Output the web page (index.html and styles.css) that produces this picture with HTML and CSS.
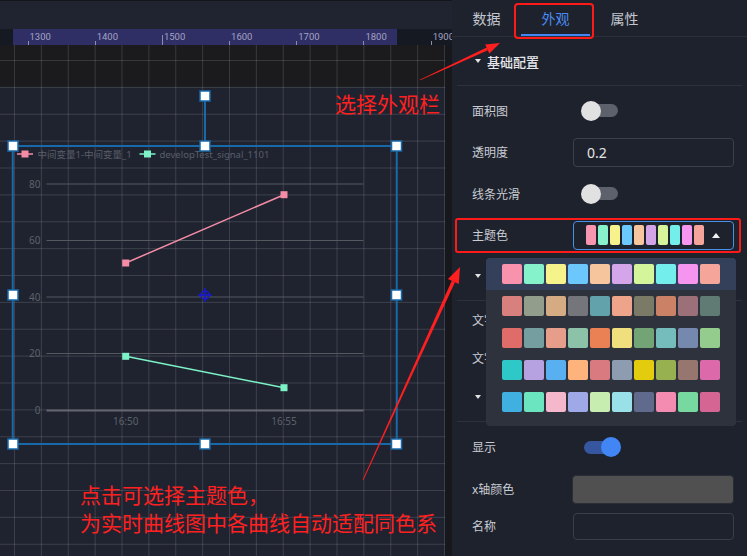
FILE: index.html
```html
<!DOCTYPE html>
<html lang="zh-CN">
<head>
<meta charset="utf-8">
<title>外观配置</title>
<link rel="stylesheet" href="styles.css">
</head>
<body>
<div class="app">
  <main class="editor">
    <div class="topbar"></div>
    <div class="ruler">
      <span class="mark">1300</span>
      <span class="mark">1400</span>
      <span class="mark mark-major">1500</span>
      <span class="mark">1600</span>
      <span class="mark">1700</span>
      <span class="mark">1800</span>
      <span class="mark">1900</span>
    </div>
    <div class="workspace">
      <div class="canvas">
        <svg class="stage" width="445" height="511" viewBox="0 45 445 511">
          <!-- selection frame -->
          <line class="sel-line" x1="205" y1="96" x2="205" y2="146"/>
          <rect class="sel-line" x="12.75" y="146" width="384" height="298"/>
          <!-- legend -->
          <line class="s-pink" x1="17" y1="154" x2="33" y2="154"/>
          <rect class="m-pink" x="21.5" y="150.5" width="7" height="7"/>
          <text class="legend-text" x="37.5" y="158">中间变量1-中间变量_1</text>
          <line class="s-green" x1="139.5" y1="154" x2="155.5" y2="154"/>
          <rect class="m-green" x="144" y="150.5" width="7" height="7"/>
          <text class="legend-text" x="159.5" y="158">developTest_signal_1101</text>
          <!-- axes -->
          <line class="axis" x1="46.5" y1="184" x2="363.5" y2="184"/>
          <line class="axis" x1="46.5" y1="240.5" x2="363.5" y2="240.5"/>
          <line class="axis" x1="46.5" y1="297" x2="363.5" y2="297"/>
          <line class="axis" x1="46.5" y1="353.5" x2="363.5" y2="353.5"/>
          <line class="axis axis-zero" x1="46.5" y1="410.5" x2="363.5" y2="410.5"/>
          <text class="tick-text" x="40.5" y="187.5" text-anchor="end">80</text>
          <text class="tick-text" x="40.5" y="244" text-anchor="end">60</text>
          <text class="tick-text" x="40.5" y="300.5" text-anchor="end">40</text>
          <text class="tick-text" x="40.5" y="357" text-anchor="end">20</text>
          <text class="tick-text" x="40.5" y="414" text-anchor="end">0</text>
          <text class="tick-text" x="125.7" y="425" text-anchor="middle">16:50</text>
          <text class="tick-text" x="284" y="425" text-anchor="middle">16:55</text>
          <!-- series -->
          <line class="s-pink" x1="125.7" y1="263" x2="284" y2="194.7"/>
          <rect class="m-pink" x="122.2" y="259.5" width="7" height="7"/>
          <rect class="m-pink" x="280.5" y="191.2" width="7" height="7"/>
          <line class="s-green" x1="125.7" y1="356.3" x2="284" y2="387.7"/>
          <rect class="m-green" x="122.2" y="352.8" width="7" height="7"/>
          <rect class="m-green" x="280.5" y="384.2" width="7" height="7"/>
          <!-- center crosshair -->
          <g class="cross">
            <circle cx="205" cy="295" r="4"/>
            <line x1="198" y1="295" x2="212" y2="295"/>
            <line x1="205" y1="288" x2="205" y2="302"/>
          </g>
          <!-- handles -->
          <rect class="handle" x="200" y="91" width="10" height="10"/>
          <rect class="handle" x="8" y="141" width="10" height="10"/>
          <rect class="handle" x="200" y="141" width="10" height="10"/>
          <rect class="handle" x="391.5" y="141" width="10" height="10"/>
          <rect class="handle" x="8" y="290" width="10" height="10"/>
          <rect class="handle" x="391.5" y="290" width="10" height="10"/>
          <rect class="handle" x="8" y="439" width="10" height="10"/>
          <rect class="handle" x="200" y="439" width="10" height="10"/>
          <rect class="handle" x="391.5" y="439" width="10" height="10"/>
        </svg>
      </div>
      <div class="vscroll"></div>
    </div>
  </main>

  <aside class="panel">
    <nav class="tabs">
      <span class="tab">数据</span>
      <span class="tab tab-active">外观</span>
      <span class="tab">属性</span>
    </nav>

    <section>
      <div class="sec-head sec-first"><span class="caret"></span>基础配置</div>
      <div class="rows">
        <div class="row">
          <span class="label">面积图</span>
          <span class="switch"><span class="track"></span><span class="knob"></span></span>
        </div>
        <div class="row">
          <span class="label">透明度</span>
          <span class="input">0.2</span>
        </div>
        <div class="row">
          <span class="label">线条光滑</span>
          <span class="switch"><span class="track"></span><span class="knob"></span></span>
        </div>
        <div class="row">
          <span class="label">主题色</span>
          <div class="select">
            <span class="chip" style="background:#f895af"></span>
            <span class="chip" style="background:#88f2cb"></span>
            <span class="chip" style="background:#f7f28c"></span>
            <span class="chip" style="background:#6cc9fb"></span>
            <span class="chip" style="background:#f7c69e"></span>
            <span class="chip" style="background:#d3a5e6"></span>
            <span class="chip" style="background:#d6f59b"></span>
            <span class="chip" style="background:#74eeeb"></span>
            <span class="chip" style="background:#f796ef"></span>
            <span class="chip" style="background:#f5a49c"></span>
            <span class="arrow-up"></span>
            <div class="dropdown">
              <div class="pal pal-active">
                <span class="sw" style="background:#f892ad"></span>
                <span class="sw" style="background:#86f2cc"></span>
                <span class="sw" style="background:#f6f38b"></span>
                <span class="sw" style="background:#6cc8fc"></span>
                <span class="sw" style="background:#f7c59d"></span>
                <span class="sw" style="background:#d4a5e8"></span>
                <span class="sw" style="background:#d5f59a"></span>
                <span class="sw" style="background:#73eeec"></span>
                <span class="sw" style="background:#f695f0"></span>
                <span class="sw" style="background:#f6a59b"></span>
              </div>
              <div class="pal">
                <span class="sw" style="background:#d8807e"></span>
                <span class="sw" style="background:#929d8c"></span>
                <span class="sw" style="background:#d4ab82"></span>
                <span class="sw" style="background:#74767b"></span>
                <span class="sw" style="background:#62a2aa"></span>
                <span class="sw" style="background:#eea48a"></span>
                <span class="sw" style="background:#7b7a66"></span>
                <span class="sw" style="background:#ca8166"></span>
                <span class="sw" style="background:#9b7079"></span>
                <span class="sw" style="background:#5f7b74"></span>
              </div>
              <div class="pal">
                <span class="sw" style="background:#df6c69"></span>
                <span class="sw" style="background:#759ea0"></span>
                <span class="sw" style="background:#e69e8a"></span>
                <span class="sw" style="background:#8bc2a8"></span>
                <span class="sw" style="background:#ea8155"></span>
                <span class="sw" style="background:#f0e07d"></span>
                <span class="sw" style="background:#72a476"></span>
                <span class="sw" style="background:#75bcbd"></span>
                <span class="sw" style="background:#7589ae"></span>
                <span class="sw" style="background:#94cc8d"></span>
              </div>
              <div class="pal">
                <span class="sw" style="background:#2fc8c8"></span>
                <span class="sw" style="background:#b6a2e0"></span>
                <span class="sw" style="background:#58b0f0"></span>
                <span class="sw" style="background:#feb37c"></span>
                <span class="sw" style="background:#d87a80"></span>
                <span class="sw" style="background:#8e9cb1"></span>
                <span class="sw" style="background:#e2cc0d"></span>
                <span class="sw" style="background:#98b150"></span>
                <span class="sw" style="background:#977670"></span>
                <span class="sw" style="background:#dc69aa"></span>
              </div>
              <div class="pal">
                <span class="sw" style="background:#3fb0e0"></span>
                <span class="sw" style="background:#6ae5c0"></span>
                <span class="sw" style="background:#f5b7cc"></span>
                <span class="sw" style="background:#a0a9e8"></span>
                <span class="sw" style="background:#c7eeb0"></span>
                <span class="sw" style="background:#99e0e8"></span>
                <span class="sw" style="background:#5f6a8c"></span>
                <span class="sw" style="background:#f48bb0"></span>
                <span class="sw" style="background:#77d8a0"></span>
                <span class="sw" style="background:#d56592"></span>
              </div>
            </div>
          </div>
        </div>
      </div>
    </section>

    <section>
      <div class="sec-head"><span class="caret"></span>图例配置</div>
      <div class="rows rows-flat">
        <div class="row row-38"><span class="label">文字颜色</span></div>
        <div class="row row-38"><span class="label">文字大小</span></div>
      </div>
    </section>

    <section>
      <div class="sec-head"><span class="caret"></span>X轴配置</div>
      <div class="rows">
        <div class="row row-42">
          <span class="label">显示</span>
          <span class="switch switch-on"><span class="track"></span><span class="knob"></span></span>
        </div>
        <div class="row row-42">
          <span class="label">x轴颜色</span>
          <span class="color-box"></span>
        </div>
        <div class="row row-32">
          <span class="label">名称</span>
          <span class="input input-empty"></span>
        </div>
      </div>
    </section>
  </aside>

  <svg class="arrows" width="747" height="556" viewBox="0 0 747 556">
    <polygon points="419.83,79.64 486.7,47.5 487.9,50.3 420.17,80.36"/>
    <polygon points="500,43 489.4,53.4 485.2,44.4"/>
    <polygon points="362.64,479.83 451.78,280.83 454.96,282.29 363.36,480.17"/>
    <polygon points="460,267 458.83,284.05 447.91,279.07"/>
  </svg>
  <div class="note note-tab"></div>
  <div class="note note-theme"></div>
  <p class="callout callout-top">选择外观栏</p>
  <p class="callout callout-bottom">点击可选择主题色，<br>为实时曲线图中各曲线自动适配同色系</p>
</div>
</body>
</html>
```

FILE: styles.css
```css
* { box-sizing: border-box; margin: 0; padding: 0; }

html, body {
  width: 747px;
  height: 556px;
  overflow: hidden;
  background: #1e222d;
}

body {
  font-family: "Noto Sans", "Noto Sans CJK SC", sans-serif;
}

.app {
  position: relative;
  display: flex;
  width: 747px;
  height: 556px;
}

/* ---------- editor (left) ---------- */
.editor {
  flex: 0 0 452px;
  display: flex;
  flex-direction: column;
  overflow: hidden;
}

.topbar {
  height: 29px;
  background: #1f2430;
  border-top: 1px solid #14161b;
}

.ruler {
  height: 16px;
  display: flex;
  padding-left: 27.5px;
  white-space: nowrap;
  overflow: hidden;
  background: linear-gradient(to right, #151922 13px, #2f2f66 13px, #2f2f66 397px, #151922 397px);
}

.mark {
  flex: 0 0 67.2px;
  padding-left: 2px;
  font-family: Roboto, "Liberation Sans", sans-serif;
  font-size: 9.5px;
  line-height: 15px;
  color: #a3a3c2;
  background: linear-gradient(#8c8cab, #8c8cab) left bottom / 1px 4px no-repeat;
}

.mark-major { background-size: 1px 10px; }

.workspace {
  flex: 1;
  display: flex;
}

.canvas {
  flex: 0 0 445px;
  position: relative;
  overflow: hidden;
  background-color: #1f2330;
  background-image:
    linear-gradient(to right, rgba(255, 255, 255, 0.13) 1px, transparent 1px),
    linear-gradient(to bottom, rgba(255, 255, 255, 0.13) 1px, transparent 1px),
    linear-gradient(to bottom, #1b1b1d 42px, #1f2330 42px);
  background-size: 26.89px 100%, 100% 26.89px, 100% 100%;
  background-position: 14px 0, 0 15px, 0 0;
}

.vscroll {
  flex: 1;
  background: #17181d;
}

.stage {
  position: absolute;
  left: 0;
  top: 0;
}

.sel-line { fill: none; stroke: #1769aa; stroke-width: 2; }
.handle { fill: #ffffff; stroke: #1769aa; stroke-width: 1.5; }

.s-pink { stroke: #f48ca6; stroke-width: 1.5; }
.s-green { stroke: #7df2c6; stroke-width: 1.5; }
.m-pink { fill: #f48ca6; }
.m-green { fill: #7df2c6; }

.legend-text {
  font-family: "Noto Sans", "Noto Sans CJK SC", sans-serif;
  font-size: 9.5px;
  fill: #5a5e68;
}

.tick-text {
  font-family: "Noto Sans", sans-serif;
  font-size: 10px;
  fill: #5d6169;
}

.axis { stroke: #55585f; stroke-width: 1.2; }
.axis-zero { stroke: #64676d; stroke-width: 2; }

.cross circle, .cross line { fill: none; stroke: #1a1acc; stroke-width: 1.6; }

/* ---------- panel (right) ---------- */
.panel {
  flex: 1;
  background: #1e222d;
  color: #c8cbd2;
  font-size: 12px;
}

.tabs {
  display: flex;
  height: 37px;
  border-bottom: 1px solid #2b2f3a;
}

.tab {
  width: 69px;
  height: 36px;
  padding-top: 3px;
  text-align: center;
  font-size: 14px;
  line-height: 31px;
  color: #c2c6cf;
  border-bottom: 2px solid transparent;
}

.tab-active {
  color: #4a8cf2;
  border-bottom-color: #4285f4;
}

.sec-head {
  height: 45px;
  margin: 0 5px;
  padding: 0 0 4px 18px;
  display: flex;
  align-items: center;
  border-bottom: 1px solid #2d313b;
  font-size: 13px;
  font-weight: 500;
  color: #e6e8ec;
}

.sec-first { margin-top: 4px; }

.caret {
  width: 0;
  height: 0;
  margin-right: 6px;
  border-left: 3.5px solid transparent;
  border-right: 3.5px solid transparent;
  border-top: 4px solid #e2e2e2;
}

.rows { padding-top: 4px; }
.rows-flat { padding-top: 0; }

.row {
  display: flex;
  align-items: center;
  height: 41.5px;
  padding-left: 20px;
}

.row-38 { height: 38px; }
.row-42 { height: 42px; }
.row-32 { height: 32px; }

.label {
  flex: 0 0 101px;
  color: #c9ccd3;
  font-size: 12px;
}

.switch {
  position: relative;
  display: flex;
  align-items: center;
  width: 40px;
  height: 20px;
  margin-left: 8px;
}

.track {
  width: 35px;
  height: 13px;
  margin-left: 2px;
  border-radius: 7px;
  background: #5d616b;
}

.knob {
  position: absolute;
  left: 0;
  top: 0;
  width: 20px;
  height: 20px;
  border-radius: 50%;
  background: #e1e1e1;
}

.switch-on .track {
  width: 33px;
  margin-left: 3px;
  background: #3657a0;
}

.switch-on .knob {
  left: auto;
  right: 0;
  background: #4286f5;
}

.input {
  width: 161px;
  height: 29px;
  padding-left: 13px;
  border: 1px solid #3b404c;
  border-radius: 4px;
  font-size: 14px;
  line-height: 27px;
  color: #e6e6e6;
}

.input-empty {
  height: 27px;
  border-color: #3a3e49;
}

.color-box {
  width: 162px;
  height: 29px;
  margin-left: -1px;
  border: 1px solid #2a2d35;
  border-radius: 4px;
  background: #505050;
}

.select {
  position: relative;
  display: flex;
  align-items: center;
  gap: 2px;
  width: 161px;
  height: 29px;
  padding-left: 12px;
  border: 1px solid #4a90e6;
  border-radius: 4px;
}

.chip {
  width: 10px;
  height: 20px;
  border-radius: 2px;
}

.arrow-up {
  width: 0;
  height: 0;
  margin-left: 6px;
  border-left: 4.5px solid transparent;
  border-right: 4.5px solid transparent;
  border-bottom: 5px solid #f2f2f2;
}

.dropdown {
  position: absolute;
  left: -88px;
  top: 36px;
  z-index: 5;
  width: 250px;
  padding-bottom: 8px;
  border-radius: 4px;
  background: #2d323c;
}

.pal {
  display: flex;
  align-items: center;
  gap: 2px;
  height: 32px;
  padding-left: 16px;
}

.pal-active {
  background: #34405a;
  border-radius: 4px 4px 0 0;
}

.sw {
  width: 20px;
  height: 20px;
  border-radius: 2px;
}

/* ---------- annotations ---------- */
.arrows {
  position: absolute;
  left: 0;
  top: 0;
  z-index: 10;
  pointer-events: none;
}

.arrows polygon { fill: #ff1f1f; }

.note {
  position: absolute;
  z-index: 10;
  border: 2px solid #ff1a1a;
}

.note-tab {
  left: 514px;
  top: 3px;
  width: 80px;
  height: 36px;
  border-radius: 4px;
}

.note-theme {
  left: 455px;
  top: 218px;
  width: 286px;
  height: 35px;
  border-radius: 3px;
}

.callout {
  position: absolute;
  z-index: 10;
  font-family: "Noto Sans CJK SC", sans-serif;
  font-size: 21px;
  color: #ff2020;
  white-space: nowrap;
}

.callout-top {
  left: 335px;
  top: 93px;
  line-height: 21px;
}

.callout-bottom {
  left: 80px;
  top: 480px;
  line-height: 28px;
}
```
